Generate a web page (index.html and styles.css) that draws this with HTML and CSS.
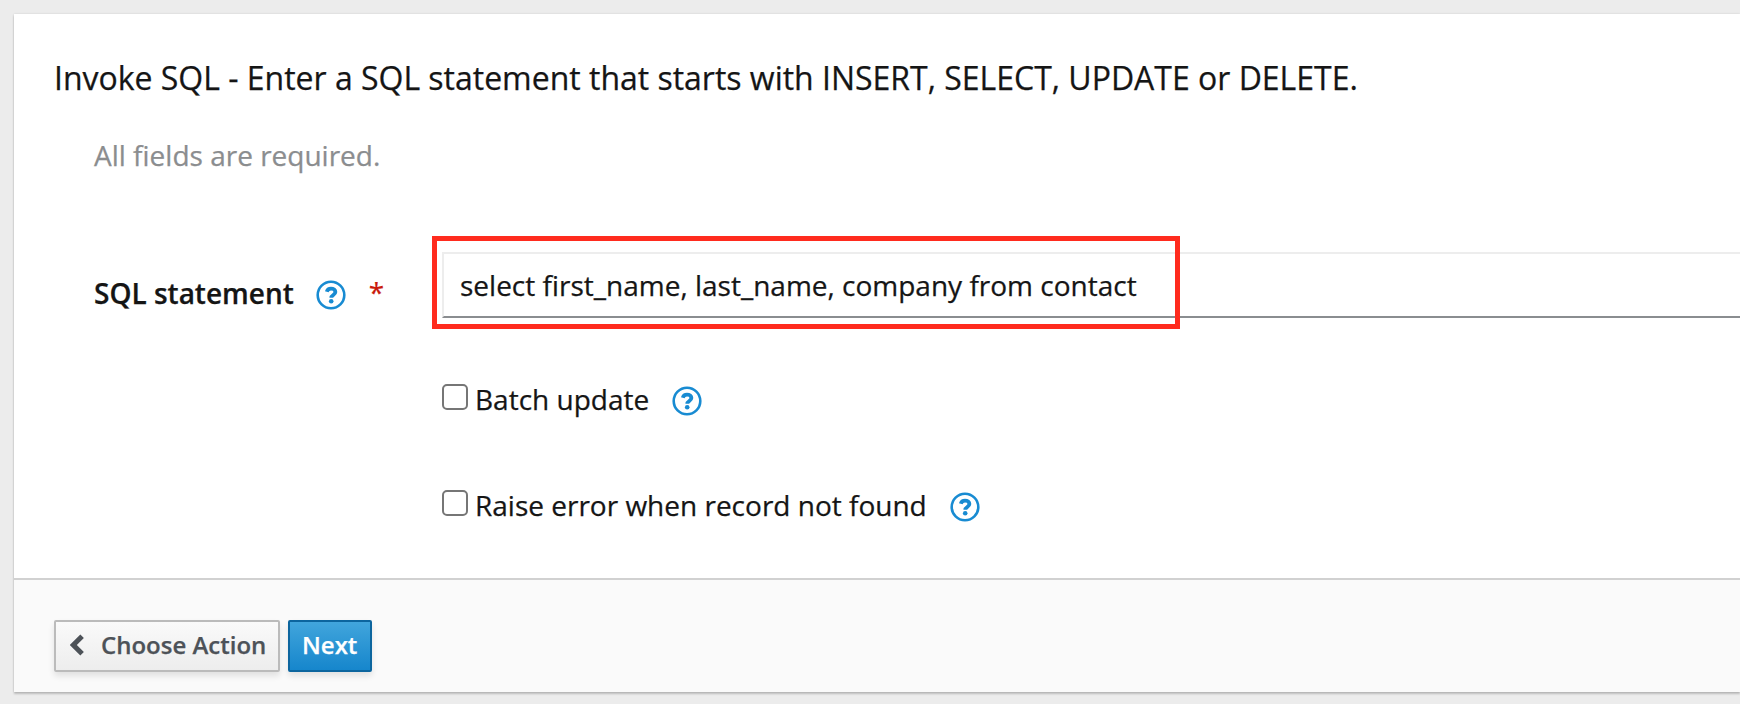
FILE: index.html
```html
<!DOCTYPE html>
<html lang="en">
<head>
<meta charset="utf-8">
<title>Invoke SQL</title>
<link rel="stylesheet" href="styles.css">
</head>
<body>
<svg width="0" height="0" class="sprite" aria-hidden="true">
  <symbol id="help" viewBox="0 0 30 30">
    <circle cx="15" cy="15" r="13.3" fill="none" stroke="currentColor" stroke-width="2.6"/>
    <path d="M10.8 11.7C11.4 9.6 12.9 8.7 15 8.7C17.6 8.7 19.4 10.1 19.4 12C19.4 15 15.3 14.9 15.3 17.7" fill="none" stroke="currentColor" stroke-width="3.8"/>
    <circle cx="15.2" cy="21.3" r="2.3" fill="currentColor"/>
  </symbol>
</svg>
<main class="panel">
  <section class="panel-body">
    <h1 class="title">Invoke SQL - Enter a SQL statement that starts with INSERT, SELECT, UPDATE or DELETE.</h1>
    <p class="hint">All fields are required.</p>
    <form class="form">
      <div class="field">
        <div class="field-label">
          <label for="sql">SQL statement</label>
          <svg class="help"><use href="#help"/></svg>
          <span class="required">*</span>
        </div>
        <div class="field-control">
          <input id="sql" class="input" type="text" value="select first_name, last_name, company from contact">
          <div class="highlight"></div>
        </div>
      </div>
      <div class="check-row">
        <span class="checkbox"></span>
        <span class="check-label">Batch update</span>
        <svg class="help"><use href="#help"/></svg>
      </div>
      <div class="check-row">
        <span class="checkbox"></span>
        <span class="check-label">Raise error when record not found</span>
        <svg class="help"><use href="#help"/></svg>
      </div>
    </form>
  </section>
  <footer class="panel-footer">
    <button class="btn btn-default" type="button"><svg class="chevron" viewBox="0 0 14 22"><path d="M12.1 2.2L3.3 11L12.1 19.8" fill="none" stroke="currentColor" stroke-width="5"/></svg>Choose Action</button>
    <button class="btn btn-primary" type="button">Next</button>
  </footer>
</main>
</body>
</html>
```
FILE: styles.css
```css
* { box-sizing: border-box; }
body {
  margin: 0;
  padding: 14px 0 0 14px;
  height: 704px;
  overflow: hidden;
  background: #ececec;
  color: #151515;
  font: 28px/42px "Open Sans", sans-serif;
  -webkit-text-stroke: .25px;
}
.sprite { position: absolute; }
.panel {
  height: 678px;
  background: #fff;
  box-shadow: 0 2px 2px rgba(3, 3, 3, .2), 0 0 2px rgba(3, 3, 3, .12);
}
.panel-body {
  height: 564px;
  padding: 40px 0 0 40px;
}
.title {
  margin: 0;
  font-size: 32px;
  font-weight: 400;
  line-height: 48px;
  letter-spacing: -.012px;
  white-space: nowrap;
}
.hint {
  margin: 32px 0 0 40px;
  color: #8b8d8f;
}
.form { margin: 76px 0 0 40px; }
.field { display: flex; }
.field-label {
  display: flex;
  width: 348px;
  padding-top: 20px;
  font-weight: 600;
}
.field-label .help { margin: 8px 0 0 22px; }
.required {
  margin: -1px 0 0 23px;
  color: #c9190b;
  font-weight: 400;
}
.field-control { position: relative; flex: 1; }
.input {
  display: block;
  width: calc(100% + 40px);
  height: 66px;
  padding: 0 16px 1px;
  border: 2px solid #ededed;
  border-bottom-color: #8a8d90;
  background: #fff;
  color: #151515;
  font: inherit;
  outline: none;
}
.highlight {
  position: absolute;
  top: -16px;
  left: -10px;
  width: 748px;
  height: 93px;
  border: 5px solid #ff2b1e;
  pointer-events: none;
}
.check-row {
  display: flex;
  margin: 60px 0 0 348px;
  height: 46px;
}
.check-label { white-space: nowrap; }
.checkbox {
  width: 26px;
  height: 26px;
  margin: 6px 7px 0 0;
  border: 2px solid #767676;
  border-radius: 5px;
}
.help {
  flex: none;
  width: 30px;
  height: 30px;
  margin: 8px 0 0 23px;
  color: #188bd2;
}
.panel-footer {
  display: flex;
  gap: 8px;
  height: 114px;
  padding: 40px 0 0 40px;
  border-top: 2px solid #d1d1d1;
  background: #fafafa;
}
.btn {
  display: flex;
  align-items: center;
  height: 52px;
  padding: 0 12px 2px;
  border: 2px solid #bbb;
  border-radius: 2px;
  box-shadow: 0 4px 6px rgba(3, 3, 3, .1);
  font: 600 24px/40px "Open Sans", sans-serif;
  white-space: nowrap;
}
.btn-default {
  width: 226px;
  padding: 0 6px 2px 14px;
  background: linear-gradient(#fafafa, #ededed);
  color: #4d5258;
}
.btn-primary {
  width: 84px;
  border-color: #0c659e;
  background: linear-gradient(#41a5dc, #1686cc);
  color: #fff;
}
.chevron {
  flex: none;
  width: 14px;
  height: 22px;
  margin-right: 17px;
}
```
